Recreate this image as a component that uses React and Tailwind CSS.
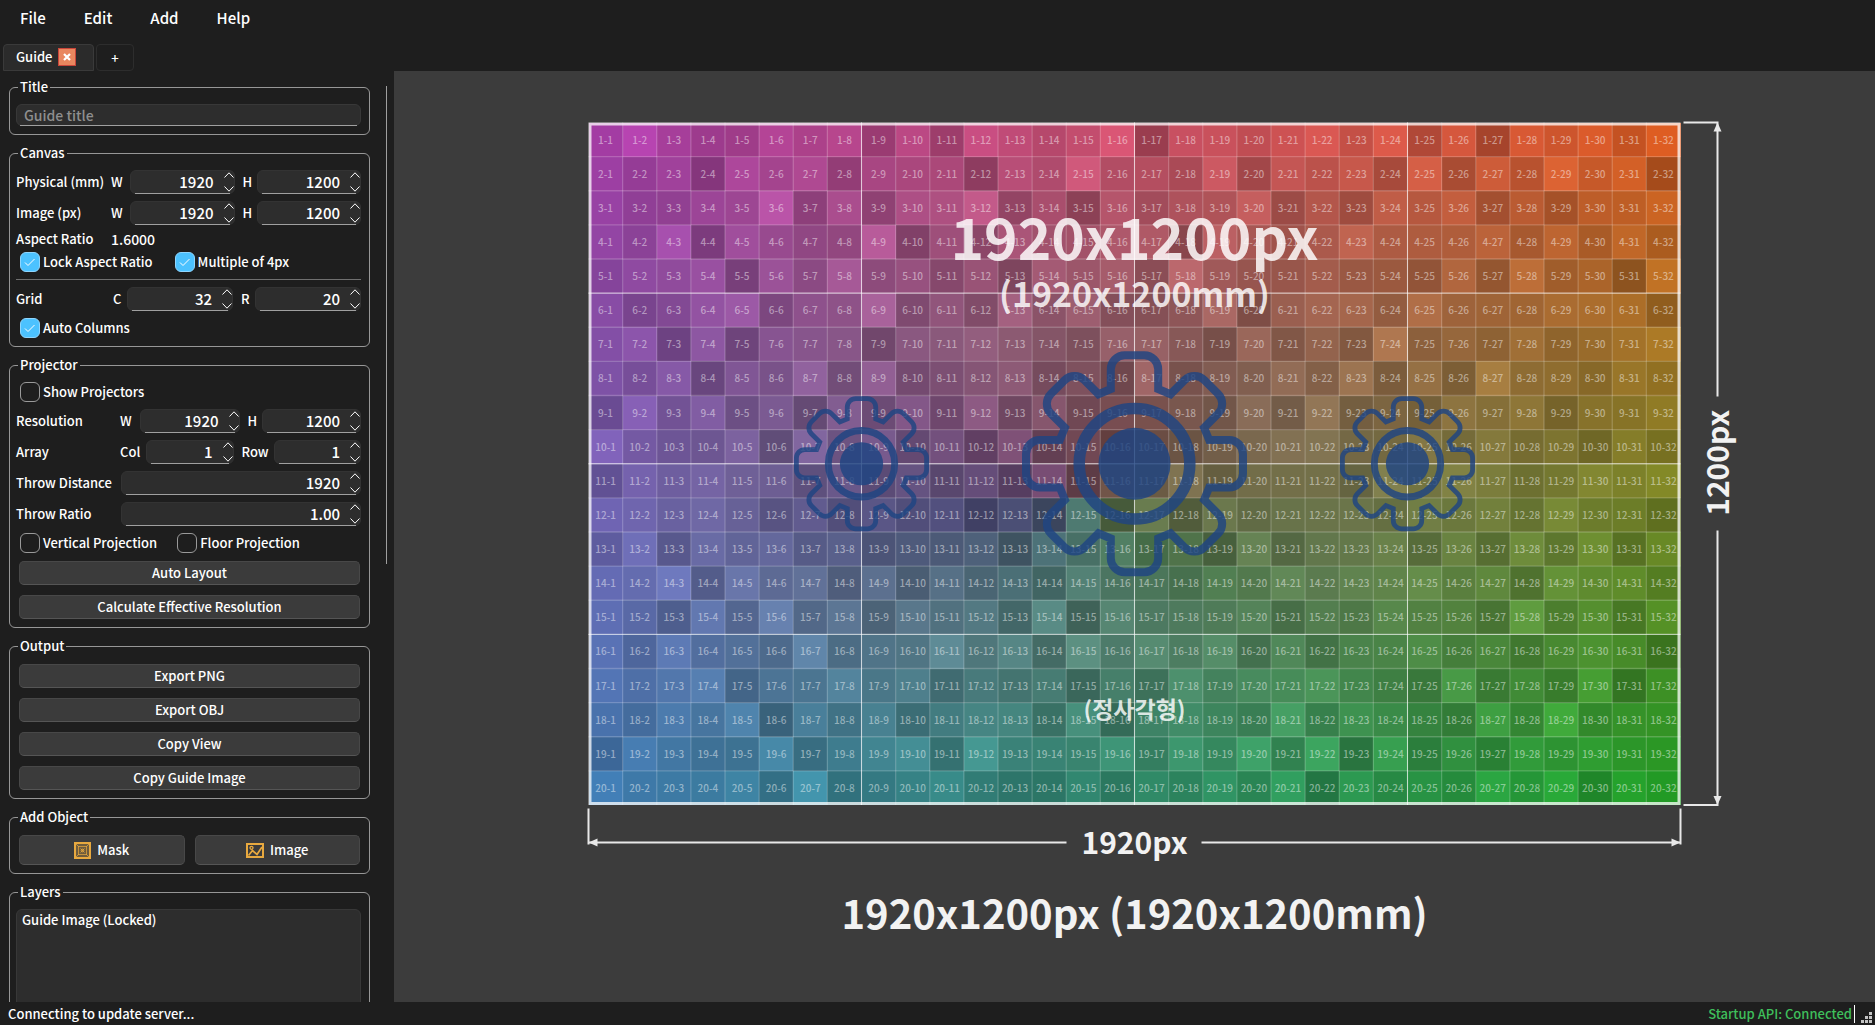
import React from "react";

const MENU = ["File", "Edit", "Add", "Help"];

const COLS = 32;
const ROWS = 20;
const CELL = 34.125;
const LEFT = -546;
const TOP = -414;
const RIGHT = LEFT + COLS * CELL;
const BOTTOM = TOP + ROWS * CELL;
const MID_Y = TOP + (ROWS * CELL) / 2;

// corner colours of the guide: top left, top right, bottom left, bottom right
const TL = [168, 60, 166];
const TR = [218, 88, 33];
const BL = [66, 121, 176];
const BR = [38, 156, 38];

// brightness of each cell, 5 is neutral
const SHADES = [
  "57544656363765682665675736265646",
  "54526563555265855473656373647562",
  "54455836366835264557353656353556",
  "54726544825365566275457555646464",
  "45562647453526563854454436374527",
  "53467355835374633472566475556663",
  "56262555255654366426353845464567",
  "54625473734563428344647363855465",
  "37463526363736344436373436563556",
  "75446274635262423345664464645364",
  "36565535353526254735553757645767",
  "66565353545252727264555465647553",
  "47365645344526574527355636374736",
  "66837563636453755465756675637664",
  "65374846365638275556354655384636",
  "64755484558573857573635564535652",
  "65673557563545253756675437353725",
  "54657264635663725654846543748455",
  "36544735673855574758482735365655",
  "65556383456433535464726454757365",
];

function cellColor(r, c) {
  const u = c / (COLS - 1);
  const v = (r + 0.4) / (ROWS - 1);
  const rgb = TL.map(
    (_, i) =>
      (TL[i] * (1 - u) + TR[i] * u) * (1 - v) + (BL[i] * (1 - u) + BR[i] * u) * v
  );
  const max = Math.max(...rgb);
  const min = Math.min(...rgb);
  // keep the middle of the guide from going grey
  const sat = Math.max((max - min) / max, 0.36);
  const k = (sat * max) / Math.max(max - min, 1);
  const light = 0.98 + (Number(SHADES[r][c]) - 5) * 0.058;
  const out = rgb.map((n) => Math.round(Math.min(255, (max - (max - n) * k) * light)));
  return `rgb(${out.join(",")})`;
}

function gearPath() {
  let d = "";
  for (let k = 0; k < 8; k++) {
    const a = (k * Math.PI) / 4;
    const p = (x, y) =>
      `${(x * Math.cos(a) - y * Math.sin(a)).toFixed(2)} ${(x * Math.sin(a) + y * Math.cos(a)).toFixed(2)}`;
    d += `${k ? "L" : "M"}${p(-23.7, -74.7)}L${p(-23.7, -94.5)}A14 14 0 0 1 ${p(-9.7, -108.5)}`;
    d += `L${p(9.7, -108.5)}A14 14 0 0 1 ${p(23.7, -94.5)}L${p(23.7, -74.7)}`;
  }
  return d + "Z";
}

const GEAR = gearPath();

const Gear = ({ x, scale }) => (
  <g
    transform={`translate(${x} ${MID_Y}) scale(${scale})`}
    fill="none"
    stroke="#1f4583"
    opacity="0.82"
  >
    <path d={GEAR} strokeWidth="8" />
    <circle r="55.3" strokeWidth="11.5" />
    <circle r="36" fill="#1f4583" stroke="none" />
  </g>
);

const GuideCanvas = () => {
  const cells = [];
  for (let r = 0; r < ROWS; r++) {
    for (let c = 0; c < COLS; c++) {
      cells.push({ r, c, x: LEFT + c * CELL, y: TOP + r * CELL });
    }
  }
  const cols = Array.from({ length: COLS - 1 }, (_, i) => i + 1);
  const rows = Array.from({ length: ROWS - 1 }, (_, i) => i + 1);

  return (
    <svg
      viewBox="-740.5 -465.5 1481 931"
      className="h-full w-full font-['Noto_Sans_CJK_KR',sans-serif]"
      role="img"
      aria-label="Guide"
    >
      <g shapeRendering="crispEdges">
        {cells.map(({ r, c, x, y }) => (
          <rect key={`${r}-${c}`} x={x} y={y} width={CELL} height={CELL} fill={cellColor(r, c)} />
        ))}
      </g>
      <g stroke="#fff" strokeWidth="1.3" strokeOpacity="0.2">
        {cols.map((i) => (
          <path key={i} d={`M${LEFT + i * CELL} ${TOP}V${BOTTOM}`} />
        ))}
        {rows.map((i) => (
          <path key={i} d={`M${LEFT} ${TOP + i * CELL}H${RIGHT}`} />
        ))}
      </g>
      <g stroke="#fff" strokeWidth="1" strokeOpacity="0.65">
        {[8, 16, 24].map((i) => (
          <path key={i} d={`M${LEFT + i * CELL} ${TOP}V${BOTTOM}`} />
        ))}
        {[5, 10, 15].map((i) => (
          <path key={i} d={`M${LEFT} ${TOP + i * CELL}H${RIGHT}`} />
        ))}
      </g>
      <rect
        x={LEFT + 1.5}
        y={TOP + 1.5}
        width={COLS * CELL - 3}
        height={ROWS * CELL - 3}
        fill="none"
        stroke="#fff"
        strokeWidth="3"
        strokeOpacity="0.75"
      />
      <g fill="#fff" fillOpacity="0.46" fontSize="10" textAnchor="middle">
        {cells.map(({ r, c, x, y }) => (
          <text key={`${r}-${c}`} x={x + CELL / 2} y={y + 21}>
            {r + 1}-{c + 1}
          </text>
        ))}
      </g>

      <Gear x={LEFT + 8 * CELL} scale={0.6} />
      <Gear x={0} scale={1} />
      <Gear x={LEFT + 24 * CELL} scale={0.6} />

      <g fill="#fff" fillOpacity="0.83" fontWeight="700" textAnchor="middle">
        <text y="-277" fontSize="57">1920x1200px</text>
        <text y="-230" fontSize="34">(1920x1200mm)</text>
        <text y="181" fontSize="23">(정사각형)</text>
      </g>

      {/* dimension lines */}
      <g stroke="#e8e8e8" strokeWidth="2" fill="none">
        <path d={`M549 ${TOP}H583V-140M549 ${BOTTOM}H583V-6`} />
        <path d={`M${LEFT} 272V308M${LEFT} 306H-68M${RIGHT} 272V308M${RIGHT} 306H67`} />
      </g>
      <g fill="#e8e8e8">
        <path d={`M583 ${TOP}l4 9h-8z`} />
        <path d={`M583 ${BOTTOM}l4 -9h-8z`} />
        <path d={`M${LEFT} 306l9 -4v8z`} />
        <path d={`M${RIGHT} 306l-9 -4v8z`} />
      </g>
      <g fill="#f2f2f2" fontWeight="700" textAnchor="middle">
        <text y="317" fontSize="30">1920px</text>
        <text transform={`translate(594 ${MID_Y - 1}) rotate(-90)`} fontSize="30">1200px</text>
        <text y="392" fontSize="40">1920x1200px (1920x1200mm)</text>
      </g>
    </svg>
  );
};

const Group = ({ title, children }) => (
  <fieldset className="min-w-0 shrink-0 rounded-md border border-[#979797] pl-1.5 pr-2 pb-2">
    <legend className="ml-0.5 px-0.5 leading-5">{title}</legend>
    {children}
  </fieldset>
);

const Spin = ({ label, value }) => (
  <span className="relative flex h-6 min-w-0 items-center rounded-md border border-[#333] bg-[#2d2d2d] after:absolute after:inset-x-1 after:-bottom-px after:h-px after:bg-[#a0a0a0]">
    <input
      aria-label={label}
      defaultValue={value}
      className="h-full w-full min-w-0 bg-transparent pr-2.5 pb-0.5 text-right text-[15px] leading-5 outline-none"
    />
    <span className="flex w-2.5 shrink-0 flex-col gap-2">
      <button type="button" aria-label={`Increase ${label}`} className="h-1.5">
        <svg viewBox="0 0 10 6" className="h-1.5 w-2.5" fill="none" stroke="#fff">
          <path d="M.5 5.5 5 .8l4.500 4.700" />
        </svg>
      </button>
      <button type="button" aria-label={`Decrease ${label}`} className="h-1.5">
        <svg viewBox="0 0 10 6" className="h-1.5 w-2.5" fill="none" stroke="#fff">
          <path d="M.5 .5 5 5.200l4.500-4.700" />
        </svg>
      </button>
    </span>
  </span>
);

const SpinPair = ({ label, cols, a, aValue, b, bValue }) => (
  <div className={`grid items-center whitespace-nowrap ${cols}`}>
    <span>{label}</span>
    <span>{a}</span>
    <Spin label={`${label} ${a}`} value={aValue} />
    <span className="pl-2">{b}</span>
    <Spin label={`${label} ${b}`} value={bValue} />
  </div>
);

const Check = ({ label, checked }) => (
  <label className="flex h-5 items-center gap-[3px] whitespace-nowrap">
    <span className="relative flex h-5 w-5">
      <input
        type="checkbox"
        defaultChecked={checked}
        className="peer h-5 w-5 appearance-none rounded-md border border-[#9a9a9a] checked:border-[#8fd6ff] checked:bg-[#4cc2ff]"
      />
      <svg
        viewBox="0 0 20 20"
        className="pointer-events-none absolute inset-0 hidden h-5 w-5 peer-checked:block"
        fill="none"
        stroke="#fff"
      >
        <path d="M5 10.500 8 13.500 14.500 7" />
      </svg>
    </span>
    {label}
  </label>
);

const Button = ({ children, className = "h-6" }) => (
  <button
    type="button"
    className={`flex w-full items-center justify-center rounded-[5px] border border-[#484848] border-b-[#555] bg-[#3b3b3b] ${className}`}
  >
    {children}
  </button>
);

const MaskIcon = () => (
  <svg viewBox="0 0 17 17" className="h-[17px] w-[17px]" fill="none" stroke="#e8a93f">
    <rect width="17" height="17" fill="#e8a93f" fillOpacity=".3" stroke="none" />
    <rect x="1" y="1" width="15" height="15" strokeWidth="2" />
    <rect x="4.500" y="4.500" width="8" height="8" strokeOpacity=".7" />
    <path d="M2 2l3 3M15 2l-3 3M2 15l3-3M15 15l-3-3M6.500 6.500l4 4M10.500 6.500l-4 4" strokeOpacity=".7" />
    <circle cx="8.500" cy="8.500" r="1.300" />
  </svg>
);

const ImageIcon = () => (
  <svg viewBox="0 0 18 15" className="h-[15px] w-[18px]" fill="none" stroke="#e8a93f">
    <rect x="1" y="1" width="16" height="13" strokeWidth="2" />
    <circle cx="5.500" cy="4.800" r="1.500" strokeWidth="1.300" />
    <path d="M2.500 12.500 6.500 7.500 11 11.500 16 4" strokeWidth="1.700" />
  </svg>
);

const SidePanel = () => (
  <aside className="flex w-[394px] shrink-0 overflow-hidden">
    <div className="flex w-[370px] shrink-0 flex-col gap-2 pl-[9px] pt-1.5">
      <Group title="Title">
        <div className="relative mt-[7px] after:absolute after:inset-x-1 after:bottom-0 after:h-px after:bg-[#a0a0a0]">
          <input
            aria-label="Guide title"
            placeholder="Guide title"
            className="block h-[22px] w-full rounded-md border border-[#383838] bg-[#2d2d2d] px-[7px] text-sm leading-5 outline-none placeholder:text-[#8f8f8f]"
          />
        </div>
      </Group>

      <Group title="Canvas">
        <div className="mt-[7px] flex flex-col gap-[7px]">
          <SpinPair label="Physical (mm)" cols="grid-cols-[95px_19px_1fr_22px_1fr]" a="W" aValue="1920" b="H" bValue="1200" />
          <SpinPair label="Image (px)" cols="grid-cols-[95px_19px_1fr_22px_1fr]" a="W" aValue="1920" b="H" bValue="1200" />
        </div>
        <div className="mt-1 grid grid-cols-[95px_1fr] leading-5">
          <span>Aspect Ratio</span>
          <span className="text-sm leading-5">1.6000</span>
        </div>
        <div className="mt-[3px] flex gap-[22px] pl-1">
          <Check label="Lock Aspect Ratio" checked />
          <Check label="Multiple of 4px" checked />
        </div>
        <hr className="my-[7px] border-[#6f6f6f]" />
        <SpinPair label="Grid" cols="grid-cols-[97px_14px_1fr_22px_1fr]" a="C" aValue="32" b="R" bValue="20" />
        <div className="mt-[7px] pl-1">
          <Check label="Auto Columns" checked />
        </div>
      </Group>

      <Group title="Projector">
        <div className="mt-[7px] pl-1">
          <Check label="Show Projectors" />
        </div>
        <div className="my-[7px] flex flex-col gap-[7px] whitespace-nowrap">
          <SpinPair label="Resolution" cols="grid-cols-[104px_20px_1fr_22px_1fr]" a="W" aValue="1920" b="H" bValue="1200" />
          <SpinPair label="Array" cols="grid-cols-[104px_26px_1fr_40px_1fr]" a="Col" aValue="1" b="Row" bValue="1" />
          <div className="grid grid-cols-[105px_1fr] items-center">
            <span>Throw Distance</span>
            <Spin label="Throw Distance" value="1920" />
          </div>
          <div className="grid grid-cols-[105px_1fr] items-center">
            <span>Throw Ratio</span>
            <Spin label="Throw Ratio" value="1.00" />
          </div>
        </div>
        <div className="flex gap-5 pl-1">
          <Check label="Vertical Projection" />
          <Check label="Floor Projection" />
        </div>
        <div className="mt-2 flex flex-col gap-2.5 pl-[3px] pr-px">
          <Button>Auto Layout</Button>
          <Button>Calculate Effective Resolution</Button>
        </div>
      </Group>

      <Group title="Output">
        <div className="mt-2 flex flex-col gap-2.5 pl-[3px] pr-px">
          <Button>Export PNG</Button>
          <Button>Export OBJ</Button>
          <Button>Copy View</Button>
          <Button>Copy Guide Image</Button>
        </div>
      </Group>

      <Group title="Add Object">
        <div className="mt-2 flex gap-2.5 pl-[3px] pr-px">
          <Button className="h-[30px] gap-1.5">
            <MaskIcon />
            Mask
          </Button>
          <Button className="h-[30px] gap-1.5">
            <ImageIcon />
            Image
          </Button>
        </div>
      </Group>

      <Group title="Layers">
        <ul className="mt-[7px] h-48 rounded-md border border-[#383838] bg-[#2d2d2d] px-[5px] leading-5">
          <li>Guide Image (Locked)</li>
        </ul>
      </Group>
    </div>
    <div className="ml-4 mt-[15px] h-[478px] w-px bg-[#9f9f9f]" />
  </aside>
);

const App = () => {
  return (
    <div className="flex h-screen flex-col overflow-hidden bg-[#1e1e1e] font-['Noto_Sans_CJK_KR',sans-serif] text-[13px] font-medium text-white">
      <nav className="flex h-11 items-center gap-[38px] px-5 pb-2 text-[15px]">
        {MENU.map((item) => (
          <button key={item} type="button">
            {item}
          </button>
        ))}
      </nav>

      <div className="flex h-[27px] shrink-0 gap-0.5 pl-[3px]">
        <div className="flex w-[91px] items-center gap-1.5 rounded-t border border-[#3a3a3a] bg-[#2b2b2b] pl-3 pb-0.5">
          <span>Guide</span>
          <button
            type="button"
            aria-label="Close Guide"
            className="flex h-[18px] w-[18px] items-center justify-center border border-[#c9453a] bg-[#e9875f]"
          >
            <svg viewBox="0 0 8 8" className="h-2 w-2" stroke="#fff" strokeWidth="2.200">
              <path d="M1 1l6 6M7 1L1 7" />
            </svg>
          </button>
        </div>
        <button type="button" className="w-[38px] rounded border border-[#2d2d2d]">
          +
        </button>
      </div>

      <div className="flex min-h-0 flex-1">
        <SidePanel />
        <main className="min-w-0 flex-1 bg-[#3c3c3c]">
          <GuideCanvas />
        </main>
      </div>

      <footer className="flex h-[23px] shrink-0 items-center justify-between pl-2 pr-0.5">
        <span>Connecting to update server...</span>
        <span className="flex items-center gap-1.5">
          <span className="border-r border-white pr-0.5 leading-[18px] text-[#3fbf5b]">
            Startup API: Connected
          </span>
          <svg viewBox="0 0 12 12" className="mt-2 h-3 w-3" fill="#c4c4c4">
            <path d="M8 0h3v3H8zM4 4h3v3H4zM8 4h3v3H8zM0 8h3v3H0zM4 8h3v3H4zM8 8h3v3H8z" />
          </svg>
        </span>
      </footer>
    </div>
  );
};

export default App;
